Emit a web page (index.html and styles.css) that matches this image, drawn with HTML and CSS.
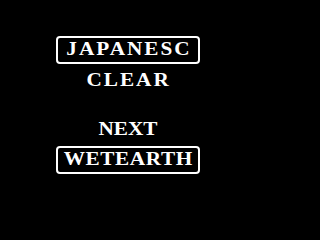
FILE: index.html
```html
<!DOCTYPE html>
<html>
<head>
<meta charset="utf-8">
<link rel="stylesheet" href="styles.css">
</head>
<body>
<main class="screen">
  <div class="box"><span class="word">JAPANESC</span></div>
  <span class="word clear">CLEAR</span>
  <span class="word next">NEXT</span>
  <div class="box box-bottom"><span class="word tight">WETEARTH</span></div>
</main>
</body>
</html>
```
FILE: styles.css
```css
html, body {
  margin: 0;
  padding: 0;
  background: #000;
}
.screen {
  width: 256px;
  height: 224px;
  background: #000;
  color: #fff;
  display: flex;
  flex-direction: column;
  align-items: center;
  padding-top: 36px;
  box-sizing: border-box;
  font-family: "Liberation Serif", "Times New Roman", serif;
  font-weight: bold;
  font-size: 18px;
  line-height: 18px;
}
.box {
  width: 144px;
  height: 28px;
  box-sizing: border-box;
  border: 2px solid #fff;
  border-radius: 4px;
  padding-top: 2px;
  display: flex;
  justify-content: center;
  align-items: flex-start;
}
.word {
  display: block;
  height: 18px;
  white-space: nowrap;
  letter-spacing: 1.7px;
  padding-left: 1.7px;
  transform: scaleX(1.18);
}
.tight {
  letter-spacing: 0.5px;
  padding-left: 0.5px;
}
.clear {
  margin-top: 7px;
}
.next {
  margin-top: 31px;
  letter-spacing: 0;
  padding-left: 0;
}
.box-bottom {
  margin-top: 8px;
}
```
